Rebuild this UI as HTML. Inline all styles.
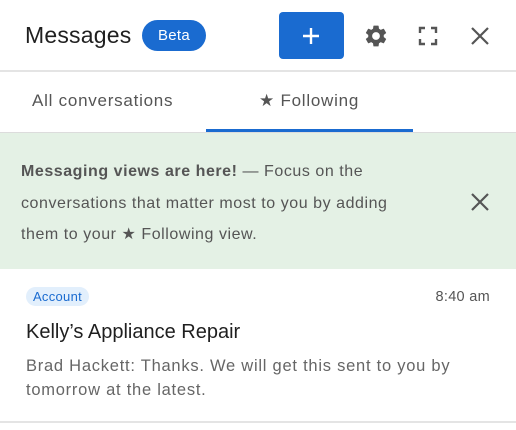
<!DOCTYPE html>
<html><head><style>
*{margin:0;padding:0;box-sizing:border-box}
body{width:516px;height:430px;background:#fff;font-family:"Liberation Sans",Arial,sans-serif;position:relative;overflow:hidden;color:#222}
.a{position:absolute}
</style></head><body>
<div class="a" style="left:25px;top:22px;font-size:23px;color:#1f1f1f;letter-spacing:0.2px">Messages</div>
<div class="a" style="left:142px;top:20px;width:64px;height:31px;border-radius:16px;background:#1a6bd0;color:#fff;font-size:15px;line-height:31px;text-align:center;letter-spacing:0.3px">Beta</div>
<div class="a" style="left:279px;top:12px;width:65px;height:47px;border-radius:4px;background:#1a6bd0"></div>
<svg class="a" style="left:300px;top:25px" width="22" height="22" viewBox="0 0 22 22"><path d="M11 3v16M3 11h16" stroke="#fff" stroke-width="2.4"/></svg>
<svg class="a" style="left:363px;top:23px" width="26" height="26" viewBox="0 0 24 24"><path fill="#555" d="M19.14 12.94c.04-.3.06-.61.06-.94 0-.32-.02-.64-.07-.94l2.03-1.58a.49.49 0 0 0 .12-.61l-1.92-3.32a.49.49 0 0 0-.59-.22l-2.39.96c-.5-.38-1.030-.7-1.62-.94l-.36-2.54a.48.48 0 0 0-.48-.41h-3.840c-.24 0-.43.17-.47.41l-.36 2.54c-.59.24-1.13.57-1.62.94l-2.39-.96a.48.48 0 0 0-.59.22L2.74 8.87c-.12.21-.08.47.12.61l2.03 1.58c-.05.3-.09.63-.09.94s.02.64.07.94l-2.03 1.58a.49.49 0 0 0-.12.61l1.92 3.32c.12.22.37.29.59.22l2.39-.96c.5.38 1.03.7 1.62.94l.36 2.54c.05.24.24.41.48.41h3.84c.24 0 .44-.17.47-.41l.36-2.54c.59-.24 1.13-.56 1.62-.94l2.39.96c.22.08.47 0 .59-.22l1.92-3.32c.12-.22.07-.47-.12-.61l-2.01-1.58zM12 15.6A3.6 3.6 0 1 1 12 8.4a3.6 3.6 0 0 1 0 7.2z"/></svg>
<svg class="a" style="left:418px;top:26px" width="20" height="20" viewBox="0 0 20 20"><path d="M2 7V2h5M13 2h5v5M18 13v5h-5M7 18H2v-5" fill="none" stroke="#555" stroke-width="2.4"/></svg>
<svg class="a" style="left:470px;top:26px" width="20" height="20" viewBox="0 0 20 20"><path d="M2 2l16 16M18 2L2 18" stroke="#555" stroke-width="2.2"/></svg>
<div class="a" style="left:0;top:70px;width:516px;height:2px;background:#e4e4e4"></div>
<div class="a" style="left:32px;top:91px;font-size:17px;color:#555;letter-spacing:0.75px">All conversations</div>
<div class="a" style="left:259px;top:91px;font-size:17px;color:#555;letter-spacing:0.75px">★ Following</div>
<div class="a" style="left:206px;top:129px;width:207px;height:3px;background:#1a6bd0"></div>
<div class="a" style="left:0;top:132px;width:516px;height:137px;background:#e4f1e5;border-top:1px solid #dcdcdc"></div>
<div class="a" style="left:21px;top:156px;width:420px;font-size:16px;line-height:31.5px;color:#555;letter-spacing:0.55px"><b>Messaging views are here!</b> — Focus on the<br>conversations that matter most to you by adding<br>them to your ★ Following view.</div>
<svg class="a" style="left:471px;top:193px" width="18" height="18" viewBox="0 0 18 18"><path d="M1 1l16 16M17 1L1 17" stroke="#555" stroke-width="2.2"/></svg>
<div class="a" style="left:26px;top:287px;width:63px;height:19px;border-radius:10px;background:#e2effc;color:#1a6bd0;font-size:13px;line-height:19px;text-align:center;letter-spacing:0.3px">Account</div>
<div class="a" style="right:26px;top:289px;font-size:14.5px;color:#555;letter-spacing:0.3px">8:40 am</div>
<div class="a" style="left:26px;top:321px;font-size:20px;color:#1f1f1f">Kelly’s Appliance Repair</div>
<div class="a" style="left:26px;top:354px;width:460px;font-size:16.5px;line-height:24px;color:#666;letter-spacing:0.75px">Brad Hackett: Thanks. We will get this sent to you by<br>tomorrow at the latest.</div>
<div class="a" style="left:0;top:421px;width:516px;height:2px;background:#e4e4e4"></div>
</body></html>
